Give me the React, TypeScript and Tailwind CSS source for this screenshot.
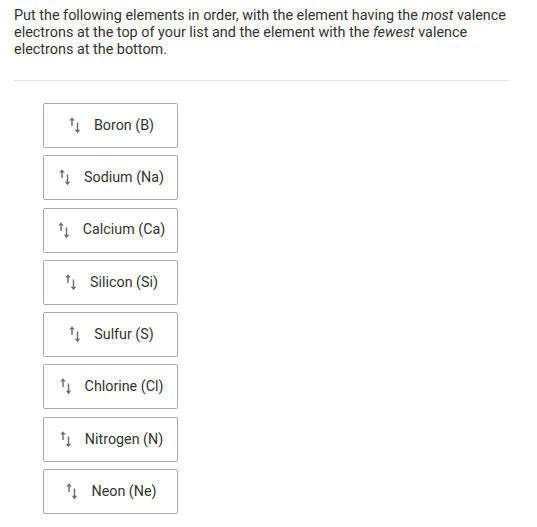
import React from 'react';

const elements = [
  'Boron (B)',
  'Sodium (Na)',
  'Calcium (Ca)',
  'Silicon (Si)',
  'Sulfur (S)',
  'Chlorine (Cl)',
  'Nitrogen (N)',
  'Neon (Ne)',
];

function SortIcon() {
  return (
    <svg width="12" height="17" viewBox="0 0 12 17" fill="none">
      {/* up arrow */}
      <path d="M3 9V2.5" stroke="#707070" strokeWidth="1.5" />
      <path d="M0.2 3.6L3 0.3L5.8 3.6Z" fill="#707070" />
      {/* down arrow */}
      <path d="M8.5 5.5v8.5" stroke="#707070" strokeWidth="1.5" />
      <path d="M5.7 12.8L8.5 16.3L11.3 12.8Z" fill="#707070" />
    </svg>
  );
}

export default function App() {
  return (
    <div className="w-[537px] h-[527px] bg-white overflow-hidden font-['Roboto',sans-serif] text-[#333]">
      <div className="w-[495px] ml-[14px] pt-[7px]">
        <p className="text-[14.4px] leading-[17px]">
          Put the following elements in order, with the element having the <em>most</em> valence
          electrons at the top of your list and the element with the <em>fewest</em> valence
          electrons at the bottom.
        </p>
        <div className="mt-[22px] border-t border-[#e2e2e2]" />
      </div>

      <div className="ml-[43px] mt-[22px] flex flex-col gap-[7.3px]">
        {elements.map((name) => (
          <div
            key={name}
            className="w-[135px] h-[45px] border border-[#a9a9a9] rounded-[2px] flex items-center justify-center gap-[13px] pl-[2px]"
          >
            <SortIcon />
            <span className="text-[14.3px]">{name}</span>
          </div>
        ))}
      </div>
    </div>
  );
}
